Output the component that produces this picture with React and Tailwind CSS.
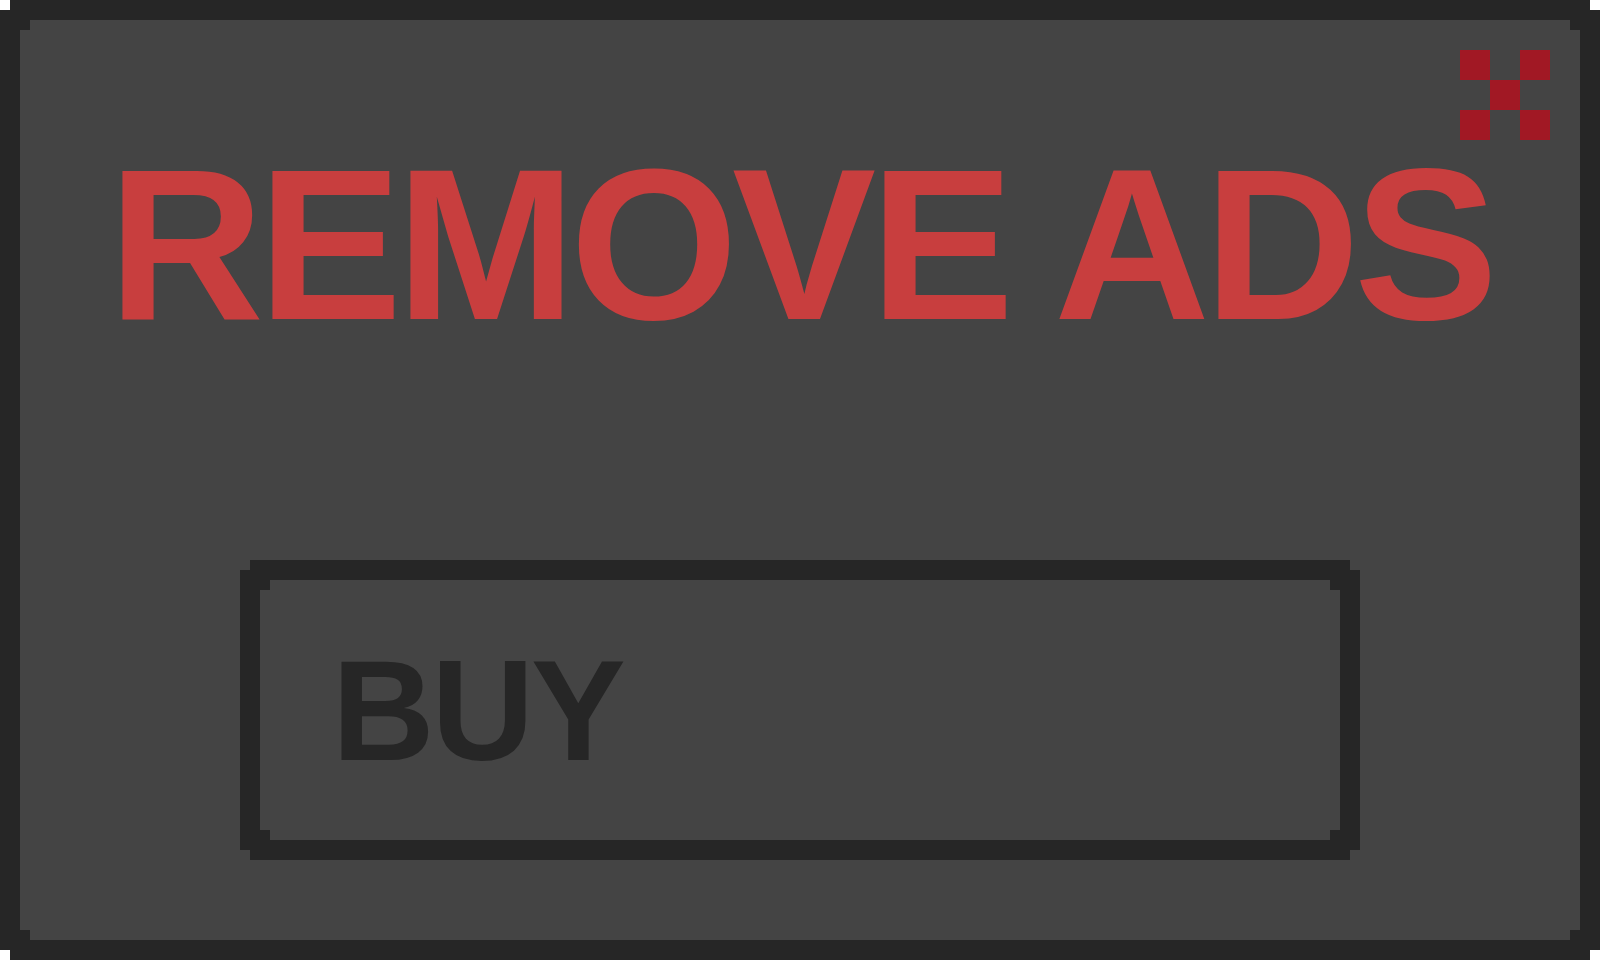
export default function App() {
  const font = { fontFamily: '"Liberation Sans", Arial, sans-serif' };
  return (
    <div className="w-[1600px] h-[960px] bg-white">
      <div className="relative w-[1600px] h-[960px] border-[20px] border-[#262626] bg-[#444444] flex flex-col">
        {/* outer corner cuts */}
        <div className="absolute -left-[20px] -top-[20px] w-[10px] h-[10px] bg-white" />
        <div className="absolute -right-[20px] -top-[20px] w-[10px] h-[10px] bg-white" />
        <div className="absolute -left-[20px] -bottom-[20px] w-[10px] h-[10px] bg-white" />
        <div className="absolute -right-[20px] -bottom-[20px] w-[10px] h-[10px] bg-white" />
        {/* inner corner steps */}
        <div className="absolute left-0 top-0 w-[10px] h-[10px] bg-[#262626]" />
        <div className="absolute right-0 top-0 w-[10px] h-[10px] bg-[#262626]" />
        <div className="absolute left-0 bottom-0 w-[10px] h-[10px] bg-[#262626]" />
        <div className="absolute right-0 bottom-0 w-[10px] h-[10px] bg-[#262626]" />

        {/* close icon */}
        <button className="absolute right-[30px] top-[30px] w-[90px] h-[90px] grid grid-cols-3 grid-rows-3">
          <span className="bg-[#a11824]" />
          <span />
          <span className="bg-[#a11824]" />
          <span />
          <span className="bg-[#a11824]" />
          <span />
          <span className="bg-[#a11824]" />
          <span />
          <span className="bg-[#a11824]" />
        </button>

        <h1
          className="mt-[116px] text-[216px] leading-none font-bold text-[#c83e3e] text-center tracking-[-6px] whitespace-nowrap"
          style={font}
        >
          REMOVE ADS
        </h1>

        <div className="relative ml-[220px] mt-[208px] w-[1120px] h-[300px] border-[20px] border-[#262626] pl-[72px] pt-[60px]">
          <div className="absolute -left-[20px] -top-[20px] w-[10px] h-[10px] bg-[#444444]" />
          <div className="absolute -right-[20px] -top-[20px] w-[10px] h-[10px] bg-[#444444]" />
          <div className="absolute -left-[20px] -bottom-[20px] w-[10px] h-[10px] bg-[#444444]" />
          <div className="absolute -right-[20px] -bottom-[20px] w-[10px] h-[10px] bg-[#444444]" />
          <div className="absolute left-0 top-0 w-[10px] h-[10px] bg-[#262626]" />
          <div className="absolute right-0 top-0 w-[10px] h-[10px] bg-[#262626]" />
          <div className="absolute left-0 bottom-0 w-[10px] h-[10px] bg-[#262626]" />
          <div className="absolute right-0 bottom-0 w-[10px] h-[10px] bg-[#262626]" />
          <span className="block text-[142px] leading-none font-bold text-[#262626] tracking-[-3px] whitespace-nowrap" style={font}>
            BUY
          </span>
        </div>
      </div>
    </div>
  );
}
